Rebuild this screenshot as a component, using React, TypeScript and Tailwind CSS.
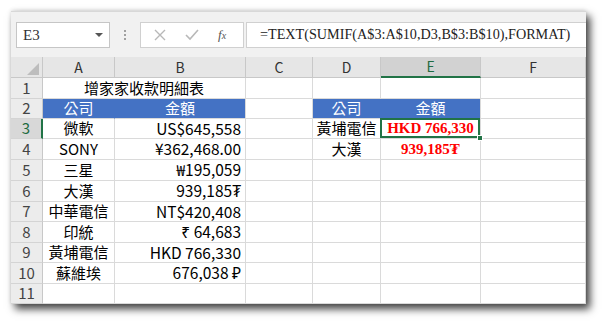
import React from 'react'

const cjk = { fontFamily: '"Noto Sans CJK TC", "Noto Sans", sans-serif' }

const rowHeights = [21, 20, 20, 21, 21, 21, 20, 21, 20, 21, 20]

const colA = ['', '公司', '微軟', 'SONY', '三星', '大漢', '中華電信', '印統', '黃埔電信', '蘇維埃', '']
const colB = ['', '金額', 'US$645,558', '¥362,468.00', '₩195,059', '939,185₮', 'NT$420,408', '₹ 64,683', 'HKD 766,330', '676,038 ₽', '']

function Cell({
  children,
  className = '',
}: {
  children?: React.ReactNode
  className?: string
}) {
  return (
    <div className={`border-r border-b border-[#dadada] flex items-center overflow-visible whitespace-nowrap ${className}`}>
      {children}
    </div>
  )
}

export default function App() {
  return (
    <div className="w-[605px] h-[324px] bg-white pt-[11px] pl-[11px]" style={cjk}>
      <div className="w-[575px] h-[293px] bg-white shadow-[4px_5px_8px_rgba(0,0,0,0.75),0_-1px_4px_rgba(0,0,0,0.12)] flex flex-col overflow-hidden">
        {/* toolbar */}
        <div className="h-[46px] bg-[#f1f1f1] border-t border-[#d8d8d8] flex items-start pt-[10px] pl-[5px]">
          <div className="w-[94px] h-[26px] bg-white border border-[#c6c6c6] flex items-center pl-[6px] pr-[6px]">
            <span className="text-[15px] text-[#333]" style={{ fontFamily: '"Liberation Serif", serif' }}>E3</span>
            <span className="ml-auto w-0 h-0 border-l-[4px] border-r-[4px] border-t-[4px] border-l-transparent border-r-transparent border-t-[#555]" />
          </div>
          <div className="w-[30px] h-[26px] flex flex-col items-center justify-center gap-[2px]">
            <span className="w-[2px] h-[2px] bg-[#a0a0a0]" />
            <span className="w-[2px] h-[2px] bg-[#a0a0a0]" />
            <span className="w-[2px] h-[2px] bg-[#a0a0a0]" />
          </div>
          <div className="w-[104px] h-[26px] bg-white border border-[#d0d0d0] flex items-center">
            <svg width="12" height="12" viewBox="0 0 12 12" className="ml-[13px]">
              <path d="M1 1 L11 11 M11 1 L1 11" stroke="#b8b8b8" strokeWidth="1.4" fill="none" />
            </svg>
            <svg width="14" height="12" viewBox="0 0 14 12" className="ml-[19px]">
              <path d="M1 6 L5 10 L13 1" stroke="#b8b8b8" strokeWidth="1.6" fill="none" />
            </svg>
            <span className="ml-[19px] text-[13px] italic text-[#555]" style={{ fontFamily: '"Liberation Serif", serif' }}>
              f<span className="text-[10px]">x</span>
            </span>
          </div>
          <div className="ml-[2px] flex-1 h-[26px] bg-white border-t border-b border-l border-[#d0d0d0] flex items-center pl-[13px]">
            <span className="text-[14.2px] text-[#222]" style={{ fontFamily: '"Liberation Serif", serif' }}>
              =TEXT(SUMIF(A$3:A$10,D3,B$3:B$10),FORMAT)
            </span>
          </div>
        </div>

        {/* sheet */}
        <div
          className="grid grid-cols-[32px_72px_131px_67px_68px_100px_105px] relative"
          style={{ gridTemplateRows: `21px ${rowHeights.map((h) => h + 'px').join(' ')}` }}
        >
          {/* column headers */}
          <div className="bg-[#e6e6e6] border-r border-b border-[#c8c8c8] flex items-end justify-end pr-[3px] pb-[2px]">
            <span className="w-0 h-0 border-l-[12px] border-t-[12px] border-l-transparent border-t-transparent border-b-0 border-r-0 relative">
              <span className="absolute -left-[12px] -top-[12px] w-0 h-0 border-b-[12px] border-l-[12px] border-b-[#bdbdbd] border-l-transparent" />
            </span>
          </div>
          {['A', 'B', 'C', 'D', 'E', 'F'].map((c) => (
            <div
              key={c}
              className={`flex items-center justify-center text-[14px] border-r border-[#c8c8c8] ${
                c === 'E'
                  ? 'bg-[#d2d2d2] border-b-2 border-b-[#217346] text-[#1e6b41]'
                  : 'bg-[#e6e6e6] border-b border-b-[#c8c8c8] text-[#333]'
              }`}
            >
              {c}
            </div>
          ))}

          {rowHeights.map((_, i) => {
            const r = i + 1
            const active = r === 3
            return (
              <React.Fragment key={r}>
                <div
                  className={`flex items-center justify-center text-[15px] border-b border-b-[#d4d4d4] ${
                    active
                      ? 'bg-[#d8d8d8] text-[#1e6b41] border-r-2 border-r-[#217346]'
                      : 'bg-[#ececec] text-[#444] border-r border-r-[#c8c8c8]'
                  }`}
                >
                  {r}
                </div>
                {r === 1 ? (
                  <Cell className="col-span-2 justify-center text-[15px] text-black">增家家收款明細表</Cell>
                ) : r === 2 ? (
                  <>
                    <Cell className="justify-center text-[15px] text-white bg-[#4472c4] border-r-[#4472c4]">公司</Cell>
                    <Cell className="justify-center text-[15px] text-white bg-[#4472c4]">金額</Cell>
                  </>
                ) : (
                  <>
                    <Cell className="justify-center text-[15px] text-black">{colA[i]}</Cell>
                    <Cell className="justify-end pr-[4px] text-[15.5px] text-black">{colB[i]}</Cell>
                  </>
                )}
                <Cell />
                {r === 2 ? (
                  <>
                    <Cell className="justify-center text-[15px] text-white bg-[#4472c4] border-r-[#4472c4]">公司</Cell>
                    <Cell className="justify-center text-[15px] text-white bg-[#4472c4]">金額</Cell>
                  </>
                ) : r === 3 ? (
                  <>
                    <Cell className="justify-center text-[15px] text-black">黃埔電信</Cell>
                    <Cell className="justify-center relative">
                      <span className="text-[15px] font-bold text-[#ff0000]" style={{ fontFamily: '"Liberation Serif", serif' }}>
                        HKD 766,330
                      </span>
                      <span className="absolute -left-[1px] -top-[1px] -right-[0px] -bottom-[0px] border-2 border-[#217346]" />
                      <span className="absolute -right-[3px] -bottom-[3px] w-[6px] h-[6px] bg-[#217346] border border-white" />
                    </Cell>
                  </>
                ) : r === 4 ? (
                  <>
                    <Cell className="justify-center text-[15px] text-black">大漢</Cell>
                    <Cell className="justify-center">
                      <span className="text-[15px] font-bold text-[#ff0000]" style={{ fontFamily: '"Liberation Serif", serif' }}>
                        939,185₮
                      </span>
                    </Cell>
                  </>
                ) : (
                  <>
                    <Cell />
                    <Cell />
                  </>
                )}
                <Cell />
              </React.Fragment>
            )
          })}
        </div>
      </div>
    </div>
  )
}
